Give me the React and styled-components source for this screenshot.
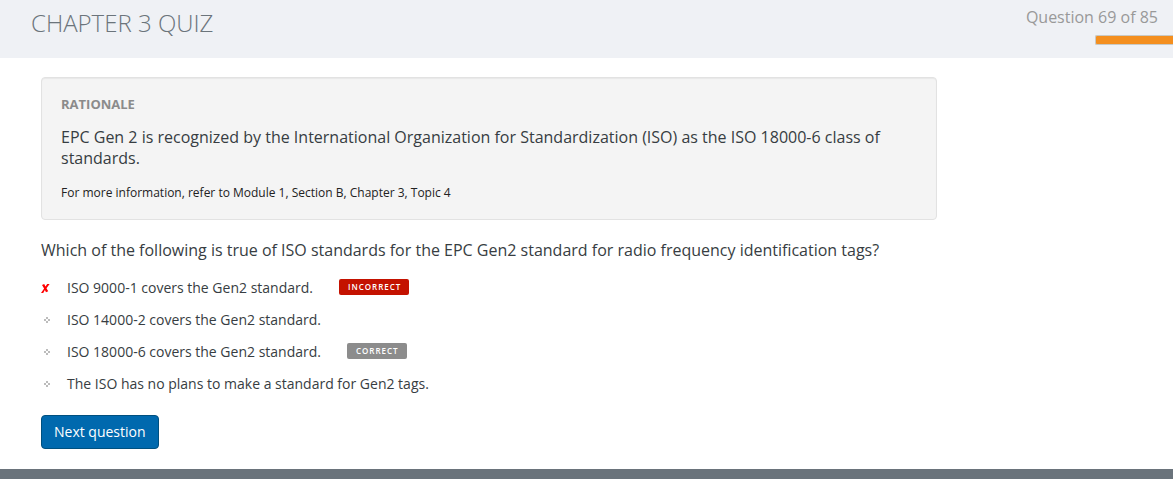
import React from "react";
import styled, { createGlobalStyle } from "styled-components";

const GlobalStyle = createGlobalStyle`
  * { box-sizing: border-box; }
  body {
    margin: 0;
    background: #fff;
    color: #373d42;
    font-family: "Open Sans", "Noto Sans", sans-serif;
    font-size: 16px;
    line-height: 21px;
  }
`;

const Page = styled.div`
  display: flex;
  flex-direction: column;
  min-height: 100vh;
`;

const Header = styled.header`
  display: flex;
  justify-content: space-between;
  align-items: flex-start;
  padding: 7px 0 13px 31px;
  background: #eff1f5;
`;

const Title = styled.h1`
  margin: 0;
  color: #6b747b;
  font-size: 24px;
  font-weight: 300;
  line-height: 32px;
  text-transform: uppercase;
`;

const Status = styled.div`
  display: flex;
  flex-direction: column;
  align-items: flex-end;
  gap: 7px;
  color: #999;
`;

const Count = styled.span`
  padding-right: 15px;
`;

const Progress = styled.div`
  width: 78px;
  height: 10px;
  border: 1px solid #c9c9c4;
  border-right: 0;
  border-radius: 2px 0 0 2px;
  background: #f48f1f;
`;

const Main = styled.main`
  flex: 1;
  width: 100%;
  max-width: 937px;
  padding: 19px 0 20px 41px;
`;

const Rationale = styled.section`
  padding: 16px 19px;
  border: 1px solid #e2e2e2;
  border-radius: 4px;
  background: #f4f4f4;
  box-shadow: inset 0 1px 1px rgba(0, 0, 0, 0.05);
`;

const RationaleTitle = styled.h2`
  margin: 0 0 13px;
  color: #8b8b8b;
  font-size: 13px;
  font-weight: 700;
  line-height: 20px;
  text-transform: uppercase;
`;

const Paragraph = styled.p`
  margin: 0 0 14px;
`;

const Reference = styled.p`
  margin: 0;
  color: #222;
  font-size: 12px;
  line-height: 20px;
`;

const Question = styled.h2`
  margin: 20px 0 10px;
  font-size: 16px;
  font-weight: 400;
  line-height: 21px;
`;

const Answers = styled.ul`
  margin: 0 0 16px;
  padding: 0;
  list-style: none;
  font-size: 14px;
`;

const Answer = styled.li`
  display: flex;
  align-items: center;
  height: 32px;
`;

const Mark = styled.svg`
  flex: none;
  width: 12px;
  height: 12px;
  margin-right: 14px;
`;

const Badge = styled.span`
  margin-left: 26px;
  padding: 0 8px 0 9px;
  border-radius: 2px;
  background: ${(p) => (p.$wrong ? "#c41200" : "#8c8c8c")};
  color: #fff;
  font-size: 8px;
  font-weight: 600;
  letter-spacing: 1px;
  line-height: 16px;
  text-transform: uppercase;
`;

const NextButton = styled.button`
  display: block;
  padding: 6px 12px;
  border: 1px solid #00507f;
  border-radius: 4px;
  background: #0069ae;
  color: #fff;
  font-family: inherit;
  font-size: 14px;
  font-weight: 400;
  line-height: 20px;
`;

const Footer = styled.footer`
  height: 10px;
  background: #6a737b;
`;

const WrongMark = () => (
  <Mark viewBox="0 0 12 12" role="img" aria-label="Your answer, incorrect">
    <path
      d="M1 4 3.2 3 4.5 5.6 6.2 3H8.6L5.5 7.2 7.2 10.2 5 11.2 3.9 9 2.2 12H0L3.1 7.5Z"
      fill="#ff0000"
    />
  </Mark>
);

const BulletMark = () => (
  <Mark viewBox="0 0 12 12" aria-hidden="true">
    <path d="M5 4h2v2H5zM3 6h2v2H3zM7 6h2v2H7zM5 8h2v2H5z" fill="#bcbcbc" />
  </Mark>
);

const answers = [
  { text: "ISO 9000-1 covers the Gen2 standard.", chosen: true, badge: "Incorrect" },
  { text: "ISO 14000-2 covers the Gen2 standard." },
  { text: "ISO 18000-6 covers the Gen2 standard.", badge: "Correct" },
  { text: "The ISO has no plans to make a standard for Gen2 tags." },
];

export default function App() {
  return (
    <Page>
      <GlobalStyle />
      <Header>
        <Title>Chapter 3 Quiz</Title>
        <Status>
          <Count>Question 69 of 85</Count>
          <Progress role="progressbar" aria-label="Quiz progress" aria-valuenow={69} aria-valuemax={85} />
        </Status>
      </Header>
      <Main>
        <Rationale>
          <RationaleTitle>Rationale</RationaleTitle>
          <Paragraph>
            EPC Gen 2 is recognized by the International Organization for
            Standardization (ISO) as the ISO 18000-6 class of standards.
          </Paragraph>
          <Reference>
            For more information, refer to Module 1, Section B, Chapter 3, Topic 4
          </Reference>
        </Rationale>
        <Question>
          Which of the following is true of ISO standards for the EPC Gen2
          standard for radio frequency identification tags?
        </Question>
        <Answers>
          {answers.map((a) => (
            <Answer key={a.text}>
              {a.chosen ? <WrongMark /> : <BulletMark />}
              <span>{a.text}</span>
              {a.badge && <Badge $wrong={a.chosen}>{a.badge}</Badge>}
            </Answer>
          ))}
        </Answers>
        <NextButton type="button">Next question</NextButton>
      </Main>
      <Footer />
    </Page>
  );
}
